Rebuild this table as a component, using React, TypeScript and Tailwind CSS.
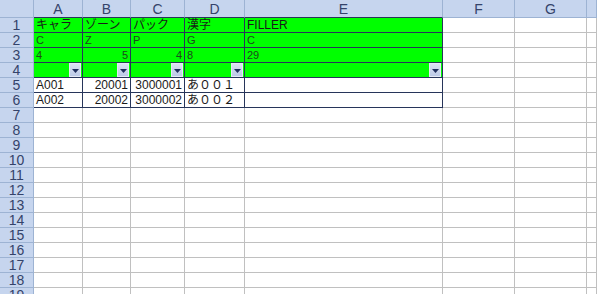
import type { ReactNode } from 'react';

type Align = 'l' | 'r';
type Cell = { v: string; a?: Align };

const COLS = ['A', 'B', 'C', 'D', 'E', 'F', 'G', ''];
const ROW_COUNT = 19;

// layout rows of the sheet (row 4 holds the autofilter buttons)
const data: Record<number, Cell[]> = {
  1: [{ v: 'キャラ' }, { v: 'ゾーン' }, { v: 'パック' }, { v: '漢字' }, { v: 'FILLER' }],
  2: [{ v: 'C' }, { v: 'Z' }, { v: 'P' }, { v: 'G' }, { v: 'C' }],
  3: [{ v: '4' }, { v: '5', a: 'r' }, { v: '4', a: 'r' }, { v: '8' }, { v: '29' }],
  5: [{ v: 'A001' }, { v: '20001', a: 'r' }, { v: '3000001', a: 'r' }, { v: 'あ００１' }, { v: '' }],
  6: [{ v: 'A002' }, { v: '20002', a: 'r' }, { v: '3000002', a: 'r' }, { v: 'あ００２' }, { v: '' }],
};

function FilterButton() {
  return (
    <div className="absolute right-[1px] top-0 bottom-0 w-[12px] bg-gradient-to-b from-[#dbe3f3] to-[#bccae6] border border-[#e4eaf6] flex items-center justify-center">
      <svg width="7" height="4" viewBox="0 0 7 4" className="mt-[2px]">
        <path d="M0 0h7L3.5 4z" fill="#1f2f5e" />
      </svg>
    </div>
  );
}

function SheetCell({ row, col }: { row: number; col: number }) {
  const inTable = row <= 6 && col <= 4;
  const green = inTable && row <= 4;
  const cell = data[row]?.[col];
  const border = inTable ? 'border-[#27355a]' : 'border-[#c0c0c0]';
  let text: ReactNode = null;
  if (cell && cell.v) {
    const small = row === 2 || row === 3;
    text = (
      <span
        className={`${small ? 'text-[11px] text-[#1d4a1d]' : 'text-[12px] text-[#1a1a1a]'} leading-[13px] whitespace-nowrap`}
      >
        {cell.v}
      </span>
    );
  }
  return (
    <div
      className={`relative flex items-end overflow-hidden border-r border-b ${border} ${
        green ? 'bg-[#00ff00]' : 'bg-white'
      } ${cell?.a === 'r' ? 'justify-end pr-[2px]' : 'justify-start pl-[2px]'}`}
    >
      {text}
      {row === 4 && col <= 4 && <FilterButton />}
    </div>
  );
}

export default function App() {
  const rows = Array.from({ length: ROW_COUNT }, (_, i) => i + 1);
  return (
    <div className="w-[597px] h-[294px] overflow-hidden bg-white font-['Liberation_Sans','Noto_Sans_CJK_JP',sans-serif]">
      <div className="grid grid-cols-[34px_49px_48px_54px_60px_198px_72px_72px_1fr] grid-rows-[18px_repeat(19,15px)]">
        {/* column header strip */}
        <div className="bg-[#c6d5ee] border-r border-b border-[#9db3d3]" />
        {COLS.map((c, i) => (
          <div
            key={`h${i}`}
            className={`bg-[#c6d5ee] border-r border-b ${
              i <= 4 ? 'border-b-[#27355a]' : 'border-b-[#9db3d3]'
            } border-r-[#9db3d3] flex items-center justify-center text-[14px] text-[#34436a] leading-none pt-[1px]`}
          >
            {c}
          </div>
        ))}
        {rows.map((r) => (
          <div key={`r${r}`} className="contents">
            <div className="bg-[#c6d5ee] border-r border-b border-[#9db3d3] flex items-center justify-center text-[14px] text-[#34436a] leading-none">
              {r}
            </div>
            {COLS.map((_, ci) => (
              <SheetCell key={ci} row={r} col={ci} />
            ))}
          </div>
        ))}
      </div>
    </div>
  );
}
